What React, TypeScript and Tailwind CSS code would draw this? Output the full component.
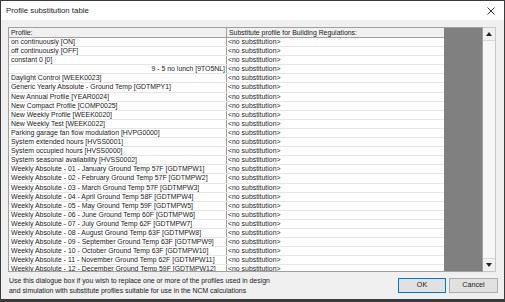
import React from "react";

const rows: { name: string; right?: boolean }[] = [
  { name: "on continuously [ON]" },
  { name: "off continuously [OFF]" },
  { name: "constant 0 [0]" },
  { name: "9 - 5 no lunch [9TO5NL]", right: true },
  { name: "Daylight Control [WEEK0023]" },
  { name: "Generic Yearly Absolute - Ground Temp [GDTMPY1]" },
  { name: "New Annual Profile [YEAR0024]" },
  { name: "New Compact Profile [COMP0025]" },
  { name: "New Weekly Profile [WEEK0020]" },
  { name: "New Weekly Test [WEEK0022]" },
  { name: "Parking garage fan flow modulation [HVPG0000]" },
  { name: "System extended hours [HVSS0001]" },
  { name: "System occupied hours [HVSS0000]" },
  { name: "System seasonal availability [HVSS0002]" },
  { name: "Weekly Absolute - 01 - January Ground Temp 57F [GDTMPW1]" },
  { name: "Weekly Absolute - 02 - February Ground Temp 57F [GDTMPW2]" },
  { name: "Weekly Absolute - 03 - March Ground Temp 57F [GDTMPW3]" },
  { name: "Weekly Absolute - 04 - April Ground Temp 58F [GDTMPW4]" },
  { name: "Weekly Absolute - 05 - May Ground Temp 59F [GDTMPW5]" },
  { name: "Weekly Absolute - 06 - June Ground Temp 60F [GDTMPW6]" },
  { name: "Weekly Absolute - 07 - July Ground Temp 62F [GDTMPW7]" },
  { name: "Weekly Absolute - 08 - August Ground Temp 63F [GDTMPW8]" },
  { name: "Weekly Absolute - 09 - September Ground Temp 63F [GDTMPW9]" },
  { name: "Weekly Absolute - 10 - October Ground Temp 63F [GDTMPW10]" },
  { name: "Weekly Absolute - 11 - November Ground Temp 62F [GDTMPW11]" },
  { name: "Weekly Absolute - 12 - December Ground Temp 59F [GDTMPW12]" },
];

export default function App() {
  return (
    <div
      className="w-[505px] h-[302px] flex flex-col border border-[#3c3c3c] border-b-[3px] bg-[#f0f0f0] text-[#1a1a1a] overflow-hidden"
      style={{ fontFamily: '"Liberation Sans", Arial, sans-serif' }}
    >
      {/* Title bar */}
      <div className="h-[19px] shrink-0 bg-white flex items-center justify-between pl-[5px] pr-[9px]">
        <span className="text-[7.8px] leading-none">Profile substitution table</span>
        <svg width="8" height="8" viewBox="0 0 8 8">
          <path d="M0.5 0.5 L7.5 7.5 M7.5 0.5 L0.5 7.5" stroke="#222" strokeWidth="0.9" />
        </svg>
      </div>

      {/* Body */}
      <div className="flex-1 flex flex-col pl-[7px] pr-[6px] pt-[7px]">
        <div className="flex h-[245px] shrink-0">
          {/* grid */}
          <div className="w-[475px] h-full flex border border-[#a0a0a0] bg-[#808080] overflow-hidden">
            <div className="w-[435px] shrink-0 flex flex-col bg-white text-[6.9px] leading-[8px]">
              <div className="flex h-[10px] shrink-0 items-center bg-[#f0f0f0] border-b border-[#a0a0a0]">
                <div className="w-[218px] h-full flex items-center shrink-0 border-r border-[#a0a0a0] pl-[2px] whitespace-nowrap overflow-hidden">
                  Profile:
                </div>
                <div className="flex-1 pl-[2px] whitespace-nowrap overflow-hidden">
                  Substitute profile for Building Regulations:
                </div>
              </div>
              {rows.map((r, i) => (
                <div key={i} className="flex h-[9.1px] shrink-0 border-b border-[#e6e6e6]">
                  <div
                    className={
                      r.right
                        ? "w-[218px] shrink-0 border-r border-[#a0a0a0] pr-[1px] text-right whitespace-nowrap overflow-hidden"
                        : "w-[218px] shrink-0 border-r border-[#a0a0a0] pl-[2px] whitespace-nowrap overflow-hidden"
                    }
                  >
                    {r.name}
                  </div>
                  <div className="flex-1 pl-[1px] whitespace-nowrap overflow-hidden">
                    &lt;no substitution&gt;
                  </div>
                </div>
              ))}
            </div>
          </div>
          {/* scrollbar */}
          <div className="w-[13px] h-full flex flex-col border-y border-r border-[#c8c8c8] bg-[#f4f4f4]">
            <div className="h-[13px] shrink-0 flex items-center justify-center border-b border-[#d8d8d8] bg-[#f0f0f0]">
              <svg width="6" height="4" viewBox="0 0 6 4">
                <path d="M0 4 L3 0 L6 4 Z" fill="#222" />
              </svg>
            </div>
            <div className="flex-1 bg-[#f7f7f7]" />
            <div className="h-[13px] shrink-0 flex items-center justify-center border-t border-[#d8d8d8] bg-[#f0f0f0]">
              <svg width="6" height="4" viewBox="0 0 6 4">
                <path d="M0 0 L6 0 L3 4 Z" fill="#222" />
              </svg>
            </div>
          </div>
        </div>

        {/* footer */}
        <div className="flex justify-between items-start pt-[5px]">
          <div className="text-[6.9px] leading-[10px] pl-[1px] -mt-[1px]">
            <div>Use this dialogue box if you wish to replace one or more of the profiles used in design</div>
            <div>and simulation with substitute profiles suitable for use in the NCM calculations</div>
          </div>
          <div className="flex gap-[3px] pt-[1px]">
            <div className="w-[48px] h-[15px] flex items-center justify-center border border-[#0078d7] bg-[#e1e1e1] text-[7.2px]">
              OK
            </div>
            <div className="w-[49px] h-[15px] flex items-center justify-center border border-[#adadad] bg-[#e1e1e1] text-[7.2px]">
              Cancel
            </div>
          </div>
        </div>
      </div>
    </div>
  );
}
